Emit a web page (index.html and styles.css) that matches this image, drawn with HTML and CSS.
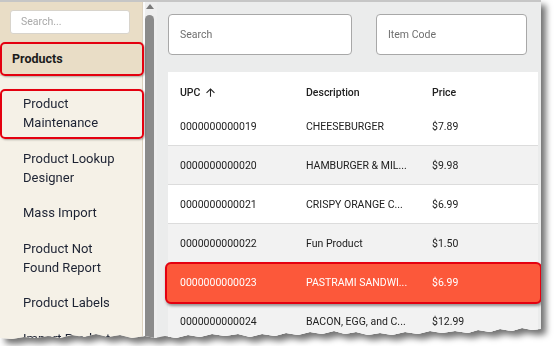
FILE: index.html
```html
<!DOCTYPE html>
<html>
<head>
<meta charset="utf-8">
<link rel="stylesheet" href="styles.css">
</head>
<body>
<div class="frame">
  <div class="shot">
    <aside class="sidebar">
      <div class="side-top">
        <div class="side-search">Search...</div>
      </div>
      <div class="nav-head annotated">Products</div>
      <ul class="nav">
        <li class="nav-item annotated">Product<br>Maintenance</li>
        <li class="nav-item">Product Lookup<br>Designer</li>
        <li class="nav-item">Mass Import</li>
        <li class="nav-item">Product Not<br>Found Report</li>
        <li class="nav-item">Product Labels</li>
        <li class="nav-item">Import Product</li>
      </ul>
    </aside>
    <div class="scrollbar">
      <div class="scroll-arrow"></div>
      <div class="scroll-thumb"></div>
    </div>
    <main class="content">
      <div class="filters">
        <div class="field field-search">Search</div>
        <div class="field field-code">Item Code</div>
      </div>
      <div class="table">
        <div class="thead">
          <div class="cell">UPC <svg class="sort" viewBox="0 0 24 24" width="13" height="13"><path d="M4 12l1.41 1.41L11 7.83V20h2V7.83l5.58 5.59L20 12l-8-8-8 8z" fill="#222"/></svg></div>
          <div class="cell">Description</div>
          <div class="cell">Price</div>
        </div>
        <div class="tbody">
          <div class="row first"><div class="cell">0000000000019</div><div class="cell">CHEESEBURGER</div><div class="cell">$7.89</div></div>
          <div class="row alt"><div class="cell">0000000000020</div><div class="cell">HAMBURGER &amp; MIL...</div><div class="cell">$9.98</div></div>
          <div class="row"><div class="cell">0000000000021</div><div class="cell">CRISPY ORANGE C...</div><div class="cell">$6.99</div></div>
          <div class="row alt"><div class="cell">0000000000022</div><div class="cell">Fun Product</div><div class="cell">$1.50</div></div>
          <div class="row selected"><div class="cell">0000000000023</div><div class="cell">PASTRAMI SANDWI...</div><div class="cell">$6.99</div></div>
          <div class="row alt"><div class="cell">0000000000024</div><div class="cell">BACON, EGG, and C...</div><div class="cell">$12.99</div></div>
        </div>
      </div>
    </main>
  </div>
</div>
</body>
</html>
```

FILE: styles.css
```css
* { box-sizing: border-box; }
body {
  margin: 0;
  background: #fff;
  font-family: Roboto, "Liberation Sans", sans-serif;
}
.frame {
  width: 541px;
  filter: drop-shadow(5px 5px 3px rgba(0,0,0,0.55));
}
.shot {
  height: 346px;
  display: flex;
  border-top: 2px solid #c6c6c6;
  background: #ebecec;
  overflow: hidden;
  clip-path: polygon(0 0, 541px 0, 541px 329px, 532px 330px, 522px 328px, 512px 331px, 500px 329px, 490px 332px, 478px 330px, 468px 333px, 455px 331px, 442px 333px, 430px 331px, 418px 334px, 405px 332px, 392px 335px, 380px 333px, 368px 335px, 356px 332px, 345px 334px, 334px 331px, 322px 334px, 310px 332px, 298px 335px, 286px 333px, 275px 336px, 262px 334px, 250px 337px, 238px 334px, 225px 336px, 212px 334px, 200px 337px, 188px 335px, 176px 338px, 165px 336px, 155px 338px, 145px 336px, 132px 338px, 120px 335px, 108px 337px, 96px 334px, 84px 337px, 72px 335px, 60px 338px, 48px 336px, 36px 338px, 24px 337px, 12px 339px, 0 338px);
}

/* sidebar */
.sidebar {
  width: 143px;
  flex: none;
  background: #f5f1e7;
  border-right: 1px solid #ddd2bf;
  display: flex;
  flex-direction: column;
}
.side-top {
  background: #e9ddc6;
  padding: 8px 12px 8px 10px;
}
.side-search {
  height: 24px;
  background: #fff;
  border: 1px solid #d8d4cc;
  border-radius: 3px;
  padding-left: 10px;
  font-size: 10.5px;
  line-height: 22px;
  color: #a9a9a9;
}
.nav-head {
  height: 34px;
  background: #e9ddc6;
  padding-left: 12px;
  font-size: 12.5px;
  font-weight: 700;
  line-height: 34px;
  color: #1b1b1b;
}
.annotated { position: relative; }
.annotated::after {
  content: "";
  position: absolute;
  left: 0;
  right: -2px;
  top: 0;
  bottom: 0;
  border: 2.5px solid #e4000f;
  border-radius: 5px;
  box-shadow: 1px 1px 2px rgba(0,0,0,0.3);
}
.nav {
  list-style: none;
  margin: 0;
  padding: 10px 0 0;
}
.nav-item {
  padding: 8.25px 0 8.25px 23px;
  font-size: 13px;
  line-height: 19px;
  color: #1d2333;
}
.nav-item.annotated::after {
  top: 3px;
  bottom: 2px;
}

/* scrollbar */
.scrollbar {
  width: 14px;
  flex: none;
  background: #eeeeee;
  border-left: 2px solid #fbfbfb;
  padding-top: 2px;
  display: flex;
  flex-direction: column;
}
.scroll-arrow {
  width: 0;
  height: 0;
  margin-left: 1px;
  border-left: 4px solid transparent;
  border-right: 4px solid transparent;
  border-bottom: 5px solid #7a7a7a;
}
.scroll-thumb {
  width: 9px;
  flex: 1;
  margin-top: 6px;
  background: #8b8b8b;
  border-radius: 5px 5px 0 0;
}

/* content */
.content {
  flex: 1;
  padding: 12px 3px 0 11px;
  display: flex;
  flex-direction: column;
  min-width: 0;
}
.filters {
  display: flex;
  gap: 24px;
}
.field {
  height: 41px;
  background: #fff;
  border: 1px solid #a8a8a8;
  border-radius: 4px;
  padding-left: 11px;
  font-size: 10.5px;
  line-height: 39px;
  color: #6f6f6f;
}
.field-search { width: 184px; }
.field-code { width: 151px; }
.table {
  margin-top: 17px;
  background: #fff;
  flex: 1;
  display: flex;
  flex-direction: column;
  min-height: 0;
}
.thead, .row {
  display: grid;
  grid-template-columns: 126px 126px 1fr;
  align-items: center;
  font-size: 10.5px;
  color: #212121;
}
.thead {
  height: 41px;
  border-bottom: 1px solid #dedede;
  font-weight: 500;
}
.cell {
  padding-left: 12px;
  white-space: nowrap;
  overflow: hidden;
}
.thead .cell {
  display: flex;
  align-items: center;
  gap: 4px;
}
.sort { flex: none; }
.tbody {
  flex: 1;
  position: relative;
}
.row {
  height: 39px;
  border-bottom: 1px solid #dcdcdc;
  background: #fff;
}
.row.first { margin-top: -6px; }
.row.alt { background: #f2f2f2; }
.row.selected {
  position: relative;
  background: #fc5a3c;
  color: #fff;
  border-bottom-color: #fc5a3c;
}
.row.selected::before {
  content: "";
  position: absolute;
  left: -3px;
  right: -4px;
  top: -1px;
  bottom: -3px;
  background: #fc583a;
  border: 2.5px solid #e4000f;
  border-radius: 6px;
  box-shadow: 1px 2px 3px rgba(0,0,0,0.4);
}
.row.selected .cell {
  position: relative;
  z-index: 1;
}
```
